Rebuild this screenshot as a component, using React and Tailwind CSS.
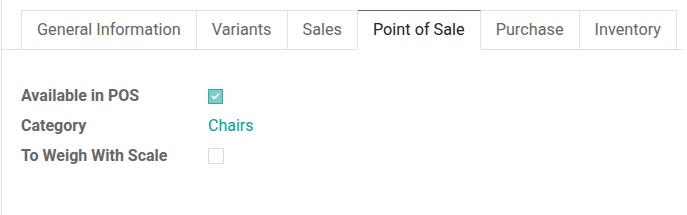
import React from "react";

const tabs = ["General Information", "Variants", "Sales", "Point of Sale", "Purchase", "Inventory"];

export default function App() {
  return (
    <div
      className="w-[687px] h-[215px] bg-white overflow-hidden"
      style={{ fontFamily: "Roboto, 'Noto Sans', sans-serif" }}
    >
      <div className="ml-px h-full border-l border-[#dee2e6]">
        <div className="flex pt-[10px] pl-[19px] border-b border-[#dee2e6] mr-[4px]">
          {tabs.map((t, i) => {
            const active = t === "Point of Sale";
            return (
              <div
                key={t}
                className={
                  "-mb-px h-[40px] flex items-center px-[15px] pt-px text-[16.25px] border-y border-r " +
                  (i === 0 ? "border-l " : "") +
                  (active
                    ? "bg-white text-[#212529] border-[#dee2e6] border-t-[#875a7b] border-b-white"
                    : "text-[#666666] border-[#dee2e6]")
                }
              >
                {t}
              </div>
            );
          })}
        </div>
        <div className="pl-[19px] pt-[31px] flex flex-col">
          <div className="flex items-center h-[30px]">
            <div className="w-[187px] text-[16px] font-bold text-[#666666]">Available in POS</div>
            <div className="w-[15px] h-[15px] border border-[#3aaaa5] bg-[#80ccc7] flex items-center justify-center">
              <svg width="9" height="8" viewBox="0 0 9 8">
                <path d="M1 4.2 L3.4 6.4 L8 1.6" stroke="white" strokeWidth="1.6" fill="none" />
              </svg>
            </div>
          </div>
          <div className="flex items-center h-[30px]">
            <div className="w-[187px] text-[16px] font-bold text-[#666666]">Category</div>
            <div className="text-[16px] text-[#00a09d]">Chairs</div>
          </div>
          <div className="flex items-center h-[30px]">
            <div className="w-[187px] text-[16px] font-bold text-[#666666]">To Weigh With Scale</div>
            <div className="w-[16px] h-[16px] border border-[#dddddd] bg-white" />
          </div>
        </div>
      </div>
    </div>
  );
}
